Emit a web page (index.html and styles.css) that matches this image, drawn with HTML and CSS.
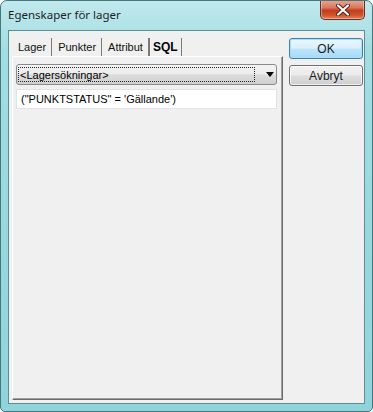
FILE: index.html
```html
<!DOCTYPE html>
<html>
<head>
<meta charset="utf-8">
<link rel="stylesheet" href="styles.css">
</head>
<body>
<div class="window">
  <div class="titlebar">
    <span class="title">Egenskaper för lager</span>
    <div class="close">
      <svg width="16" height="12" viewBox="0 0 16 12">
        <path d="M3 1.5 L13 10.5 M13 1.5 L3 10.5" stroke="#5a2018" stroke-width="4" stroke-linecap="round"/>
        <path d="M3 1.5 L13 10.5 M13 1.5 L3 10.5" stroke="#ffffff" stroke-width="2.2" stroke-linecap="round"/>
      </svg>
    </div>
  </div>
  <div class="client">
    <div class="left">
      <div class="tabs">
        <span class="tab">Lager</span>
        <span class="tab">Punkter</span>
        <span class="tab">Attribut</span>
        <span class="tab active">SQL</span>
      </div>
      <div class="panel">
        <div class="combo">
          <span class="combo-text">&lt;Lagersökningar&gt;</span>
          <span class="arrow"></span>
        </div>
        <div class="textbox">("PUNKTSTATUS" = 'Gällande')</div>
      </div>
    </div>
    <div class="right">
      <div class="btn default">OK</div>
      <div class="btn">Avbryt</div>
    </div>
  </div>
</div>
</body>
</html>
```

FILE: styles.css
```css
html, body {
  margin: 0;
  padding: 0;
  background: #ffffff;
}
.window {
  width: 373px;
  height: 412px;
  box-sizing: border-box;
  border: 1px solid #47767c;
  border-radius: 7px 7px 5px 5px;
  background: linear-gradient(180deg, #c0e9ed 0%, #a2dde2 12%, #97d8dd 60%, #8fd4da 100%);
  display: flex;
  flex-direction: column;
  font-family: "Liberation Sans", Arial, sans-serif;
  font-size: 11px;
  color: #000;
  overflow: hidden;
}
.titlebar {
  height: 29px;
  display: flex;
  align-items: flex-start;
  position: relative;
}
.title {
  font-family: "Noto Sans", "Liberation Sans", sans-serif;
  font-size: 11.5px;
  color: #1e1e1e;
  margin-left: 7px;
  margin-top: 6px;
}
.close {
  position: absolute;
  right: 7px;
  top: -1px;
  width: 45px;
  height: 20px;
  box-sizing: border-box;
  border: 1px solid #6b2c22;
  border-top: none;
  border-radius: 0 0 5px 5px;
  background: linear-gradient(180deg, #e9a995 0%, #d9785e 40%, #c43c1c 55%, #cf5430 80%, #e5845c 100%);
  box-shadow: inset 0 0 0 1px rgba(255,255,255,0.35);
  display: flex;
  align-items: center;
  justify-content: center;
}
.client {
  flex: 1;
  margin: 0 7px 7px 7px;
  background: #f0f0f0;
  border: 1px solid #5c8e93;
  display: flex;
  padding: 6px 0 0 3px;
  gap: 6px;
}
.left {
  width: 271px;
  display: flex;
  flex-direction: column;
}
.tabs {
  height: 19px;
  display: flex;
  align-items: center;
  padding-left: 0;
}
.tab {
  padding: 0 5px 0 6px;
  border-right: 1px solid #7a7a7a;
  height: 18px;
  line-height: 18px;
  color: #111;
}
.tab.active {
  font-weight: bold;
  font-size: 12px;
  border-left: 1px solid #7a7a7a;
  padding: 0 3px;
  color: #000;
}
.panel {
  flex: 1;
  margin-bottom: 3px;
  border-left: 1px solid #ffffff;
  border-top: 1px solid #ffffff;
  border-right: 1px solid #6b6b6b;
  border-bottom: 1px solid #6b6b6b;
  box-shadow: inset -1px -1px 0 #a0a0a0;
  padding: 7px 5px 0 3px;
  display: flex;
  flex-direction: column;
  gap: 4px;
}
.combo {
  height: 21px;
  box-sizing: border-box;
  border: 1px solid #8a8a8a;
  border-radius: 3px;
  background: linear-gradient(180deg, #f3f3f3 0%, #ebebeb 48%, #dcdcdc 52%, #d0d0d0 100%);
  display: flex;
  align-items: center;
  padding: 0 2px 0 1px;
}
.combo-text {
  flex: 0 0 237px;
  height: 15px;
  line-height: 15px;
  box-sizing: border-box;
  border: 1px dotted #222;
  padding-left: 1px;
}
.arrow {
  margin-left: 11px;
  width: 0;
  height: 0;
  border-left: 4px solid transparent;
  border-right: 4px solid transparent;
  border-top: 5px solid #000;
}
.textbox {
  height: 20px;
  box-sizing: border-box;
  border: 1px solid #e2e3ea;
  background: #ffffff;
  line-height: 18px;
  padding-left: 4px;
}
.right {
  width: 74px;
  display: flex;
  flex-direction: column;
  gap: 6px;
  padding-top: 1px;
}
.btn {
  height: 21px;
  box-sizing: border-box;
  border: 1px solid #707070;
  border-radius: 3px;
  background: linear-gradient(180deg, #f2f2f2 0%, #ebebeb 48%, #dddddd 52%, #cfcfcf 100%);
  box-shadow: inset 0 0 0 1px rgba(255,255,255,0.7);
  display: flex;
  align-items: center;
  justify-content: center;
  font-family: "Liberation Sans", Arial, sans-serif;
  font-size: 12px;
  color: #1a1a1a;
}
.btn.default {
  border-color: #3c7fb1;
  background: linear-gradient(180deg, #eaf6fd 0%, #d9f0fc 48%, #bee6fd 52%, #a7d9f5 100%);
  box-shadow: inset 0 0 0 1px #a6e1f8;
}
```
